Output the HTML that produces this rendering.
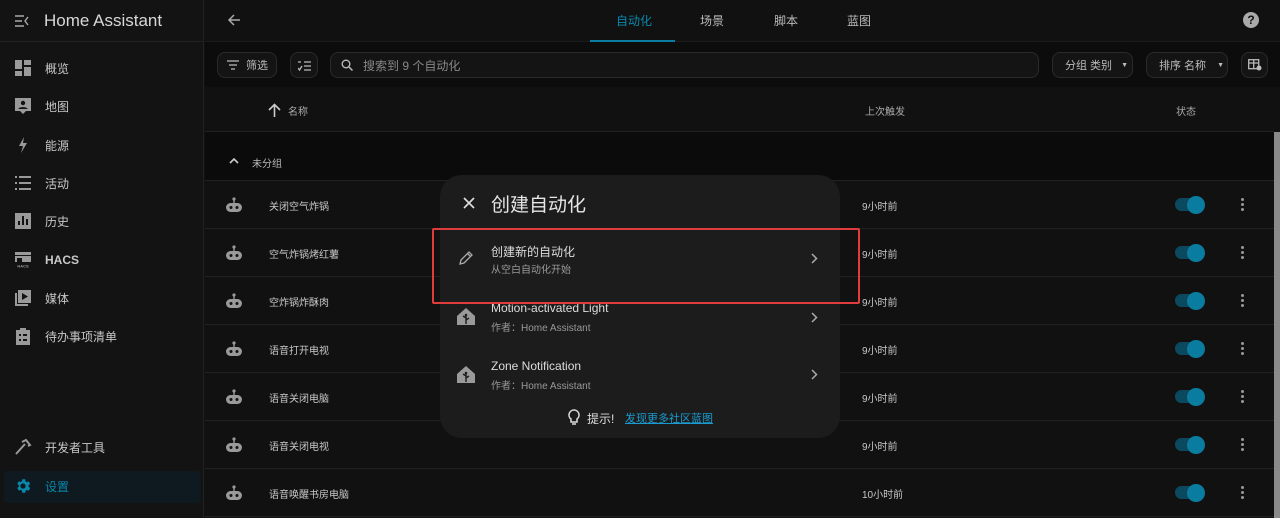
<!DOCTYPE html>
<html><head><meta charset="utf-8"><style>
*{box-sizing:border-box;margin:0;padding:0}
body{width:1280px;height:518px;overflow:hidden;background:#111;font-family:"Liberation Sans","Noto Sans CJK SC",sans-serif;color:#e1e1e1;position:relative}
.side{position:absolute;left:0;top:0;width:204px;height:518px;background:#131313;border-right:1px solid #222}
.side .hd{height:42px;border-bottom:1px solid #222;display:flex;align-items:center;padding-left:15px}
.side .hd span{font-size:17px;color:#d8d8d8;margin-left:15px}
.item{position:absolute;left:0;width:204px;height:32px;display:flex;align-items:center;font-size:12px;color:#c8c8c8}
.item svg{position:absolute;left:14px}
.item span{position:absolute;left:45px}
.top{position:absolute;left:205px;top:0;right:0;height:42px;background:#111;border-bottom:1px solid #1b1b1b}
.tab{position:absolute;top:12px;font-size:12px;color:#bbb}
.tb{position:absolute;left:205px;top:42px;right:0;height:45px;background:#0c0c0c}
.btn{position:absolute;top:52px;height:26px;border:1px solid #2a2a2a;border-radius:8px;background:#141414;font-size:11px;color:#bbb;display:flex;align-items:center}
.hrow{position:absolute;left:205px;top:87px;right:6px;height:45px;background:#111;border-bottom:1px solid #222;font-size:10px;color:#aaa}
.grp{position:absolute;left:205px;top:132px;right:6px;height:49px;background:#0b0b0b;border-bottom:1px solid #222;font-size:10px;color:#bbb}
.row{position:absolute;left:205px;right:6px;height:48px;background:#111;border-bottom:1px solid #222;font-size:10px;color:#c8c8c8}
.row .n{position:absolute;left:64px;top:17px}
.row .t{position:absolute;left:657px;top:17px}
.row .rb{position:absolute;left:20px;top:16px}
.tg{position:absolute;left:970px;top:17px;width:28px;height:13px;border-radius:7px;background:#0b4a5e}
.tg:after{content:"";position:absolute;right:-2px;top:-2.5px;width:18px;height:18px;border-radius:50%;background:#0a7ca0}
.dots{position:absolute;left:1036px;top:17px;width:3px}
.dots i{display:block;width:3px;height:3px;border-radius:50%;background:#999;margin-bottom:2px}
.dlg{position:absolute;left:440px;top:175px;width:400px;height:263px;background:#1c1c1c;border-radius:22px}
.red{position:absolute;left:432px;top:228px;width:428px;height:76px;border:2px solid #e03c3c;border-radius:2px}
.chev{position:absolute;left:371px}
</style></head><body>
<div class="side">
 <div class="hd"><svg width="14" height="12" viewBox="0 0 14 12"><path d="M0 1h9M0 6h7M0 11h9M13 2l-3 4 3 4" stroke="#aaa" stroke-width="1.4" fill="none"/></svg><span>Home Assistant</span></div>
 <div class="item" style="top:52px"><svg width="18" height="18" viewBox="0 0 18 18" fill="#9a9a9a"><rect x="1" y="1" width="7" height="9"/><rect x="10" y="1" width="7" height="5"/><rect x="1" y="12" width="7" height="5"/><rect x="10" y="8" width="7" height="9"/></svg><span>概览</span></div>
 <div class="item" style="top:90px"><svg width="18" height="18" viewBox="0 0 18 18" fill="#9a9a9a"><path d="M1 1h16v13h-5l-3 3-3-3H1z"/><circle cx="9" cy="6" r="2.2" fill="#131313"/><path d="M4.5 12c0-2.5 9-2.5 9 0z" fill="#131313"/></svg><span>地图</span></div>
 <div class="item" style="top:129px"><svg width="18" height="18" viewBox="0 0 18 18" fill="#9a9a9a"><path d="M10 1L5 10h4l-2 7 6-10H9z"/></svg><span>能源</span></div>
 <div class="item" style="top:167px"><svg width="18" height="18" viewBox="0 0 18 18" fill="#9a9a9a"><rect x="1" y="2" width="2" height="2"/><rect x="1" y="8" width="2" height="2"/><rect x="1" y="14" width="2" height="2"/><rect x="5" y="2" width="12" height="2"/><rect x="5" y="8" width="12" height="2"/><rect x="5" y="14" width="12" height="2"/></svg><span>活动</span></div>
 <div class="item" style="top:205px"><svg width="18" height="18" viewBox="0 0 18 18" fill="#9a9a9a"><path d="M1 1h16v16H1z"/><path d="M4 13V9h2v4zM8 13V4h2v9zM12 13V7h2v6z" fill="#131313"/></svg><span>历史</span></div>
 <div class="item" style="top:244px;font-weight:bold"><svg width="18" height="18" viewBox="0 0 18 18" fill="#9a9a9a"><rect x="1" y="1" width="16" height="3"/><rect x="1" y="5" width="16" height="6"/><rect x="3" y="7" width="5" height="4" fill="#131313"/><text x="9" y="16.5" font-size="4" text-anchor="middle" fill="#9a9a9a">HACS</text></svg><span>HACS</span></div>
 <div class="item" style="top:282px"><svg width="18" height="18" viewBox="0 0 18 18" fill="#9a9a9a"><path d="M4 1h13v13H4z"/><path d="M1 4h2v11h11v2H1z"/><path d="M8 4l6 3.5L8 11z" fill="#131313"/></svg><span>媒体</span></div>
 <div class="item" style="top:320px"><svg width="18" height="18" viewBox="0 0 18 18" fill="#9a9a9a"><path d="M2 3h14v15H2z"/><rect x="6" y="1" width="6" height="3"/><rect x="5" y="7" width="2" height="2" fill="#131313"/><rect x="5" y="12" width="2" height="2" fill="#131313"/><rect x="9" y="7" width="4" height="2" fill="#131313"/><rect x="9" y="12" width="4" height="2" fill="#131313"/></svg><span>待办事项清单</span></div>
 <div class="item" style="top:431px"><svg width="18" height="18" viewBox="0 0 18 18"><path d="M2 16L11 6M8 4l4-2 4 5-2 1" stroke="#9a9a9a" stroke-width="2" fill="none"/></svg><span>开发者工具</span></div>
 <div style="position:absolute;left:4px;top:471px;width:197px;height:32px;border-radius:4px;background:#0e1a1f"></div>
 <div class="item" style="top:470px;color:#0a87ad"><svg width="18" height="18" viewBox="0 0 24 24" fill="#0a87ad"><path d="M12 15.5A3.5 3.5 0 1 1 12 8.5a3.5 3.5 0 0 1 0 7zm7.4-2.5c.1-.3.1-.7.1-1s0-.7-.1-1l2.1-1.6-2-3.5-2.5 1a7 7 0 0 0-1.7-1L15 3h-4l-.4 2.6a7 7 0 0 0-1.7 1l-2.500-1-2 3.5L6.5 11c0 .3-.1.7-.1 1s0 .7.1 1l-2.1 1.6 2 3.5 2.5-1c.5.4 1.1.7 1.7 1L11 21h4l.4-2.6c.6-.3 1.2-.6 1.7-1l2.5 1 2-3.5z"/></svg><span>设置</span></div>
</div>
<div class="top">
 <svg style="position:absolute;left:22px;top:13px" width="14" height="14" viewBox="0 0 14 14"><path d="M13 7H2M7 2L2 7l5 5" stroke="#aaa" stroke-width="1.5" fill="none"/></svg>
 <div class="tab" style="left:411px;color:#0a87ad">自动化</div>
 <div style="position:absolute;left:385px;top:40px;width:85px;height:2px;background:#0a7ca0"></div>
 <div class="tab" style="left:495px">场景</div>
 <div class="tab" style="left:569px">脚本</div>
 <div class="tab" style="left:642px">蓝图</div>
 <div style="position:absolute;left:1038px;top:12px;width:16px;height:16px;border-radius:50%;background:#aaa;color:#111;font-size:12px;font-weight:bold;text-align:center;line-height:16px">?</div>
</div>
<div class="tb"></div>
<div class="btn" style="left:217px;width:60px"><svg style="margin-left:9px" width="12" height="10"><path d="M0 1h12M2 5h8M4 9h4" stroke="#bbb" stroke-width="1.3"/></svg><span style="margin-left:7px">筛选</span></div>
<div class="btn" style="left:290px;width:28px"><svg style="margin-left:7px" width="13" height="11"><path d="M0 2h3M6 2h7M6 6h7M6 10h7M0 8l1.5 2L4 6" stroke="#bbb" stroke-width="1.3" fill="none"/></svg></div>
<div class="btn" style="left:330px;width:709px;font-size:12px;color:#888"><svg style="margin-left:10px" width="12" height="12"><circle cx="5" cy="5" r="3.8" stroke="#bbb" stroke-width="1.4" fill="none"/><path d="M8 8l3.5 3.5" stroke="#bbb" stroke-width="1.5"/></svg><span style="margin-left:10px">搜索到 9 个自动化</span></div>
<div class="btn" style="left:1052px;width:81px"><span style="margin-left:12px">分组 类别</span><span style="margin-left:9px;font-size:7px">▼</span></div>
<div class="btn" style="left:1146px;width:82px"><span style="margin-left:12px">排序 名称</span><span style="margin-left:11px;font-size:7px">▼</span></div>
<div class="btn" style="left:1241px;width:27px"><svg style="margin-left:6px" width="14" height="12"><rect x="0.7" y="0.7" width="10" height="9" stroke="#bbb" stroke-width="1.3" fill="none"/><path d="M0.7 4h10M5.7 1v9" stroke="#bbb" stroke-width="1.3"/><circle cx="11" cy="9" r="2.5" fill="#bbb"/></svg></div>
<div class="hrow"><svg style="position:absolute;left:63px;top:16px" width="13" height="14"><path d="M6.5 14V2M1 7l5.5-5.5L12 7" stroke="#ccc" stroke-width="1.6" fill="none"/></svg><span style="position:absolute;left:83px;top:16px">名称</span><span style="position:absolute;left:660px;top:16px">上次触发</span><span style="position:absolute;left:971px;top:16px">状态</span></div>
<div class="grp"><svg style="position:absolute;left:24px;top:25px" width="10" height="7"><path d="M1 6l4-4 4 4" stroke="#ccc" stroke-width="1.6" fill="none"/></svg><span style="position:absolute;left:47px;top:23px">未分组</span></div>
<div style="position:absolute;right:0;top:132px;width:6px;height:386px;background:#8a8a8a"></div>
<div class="row" style="top:181px"><svg class="rb" width="18" height="16" viewBox="0 0 18 16" fill="#9a9a9a"><circle cx="9" cy="2" r="1.6"/><rect x="8.3" y="2" width="1.4" height="4"/><rect x="1" y="6" width="16" height="9" rx="4.5"/><circle cx="6" cy="10.5" r="1.5" fill="#111"/><circle cx="12" cy="10.5" r="1.5" fill="#111"/></svg><span class="n">关闭空气炸锅</span><span class="t">9小时前</span><div class="tg"></div><div class="dots"><i></i><i></i><i></i></div></div>
<div class="row" style="top:229px"><svg class="rb" width="18" height="16" viewBox="0 0 18 16" fill="#9a9a9a"><circle cx="9" cy="2" r="1.6"/><rect x="8.3" y="2" width="1.4" height="4"/><rect x="1" y="6" width="16" height="9" rx="4.5"/><circle cx="6" cy="10.5" r="1.5" fill="#111"/><circle cx="12" cy="10.5" r="1.5" fill="#111"/></svg><span class="n">空气炸锅烤红薯</span><span class="t">9小时前</span><div class="tg"></div><div class="dots"><i></i><i></i><i></i></div></div>
<div class="row" style="top:277px"><svg class="rb" width="18" height="16" viewBox="0 0 18 16" fill="#9a9a9a"><circle cx="9" cy="2" r="1.6"/><rect x="8.3" y="2" width="1.4" height="4"/><rect x="1" y="6" width="16" height="9" rx="4.5"/><circle cx="6" cy="10.5" r="1.5" fill="#111"/><circle cx="12" cy="10.5" r="1.5" fill="#111"/></svg><span class="n">空炸锅炸酥肉</span><span class="t">9小时前</span><div class="tg"></div><div class="dots"><i></i><i></i><i></i></div></div>
<div class="row" style="top:325px"><svg class="rb" width="18" height="16" viewBox="0 0 18 16" fill="#9a9a9a"><circle cx="9" cy="2" r="1.6"/><rect x="8.3" y="2" width="1.4" height="4"/><rect x="1" y="6" width="16" height="9" rx="4.5"/><circle cx="6" cy="10.5" r="1.5" fill="#111"/><circle cx="12" cy="10.5" r="1.5" fill="#111"/></svg><span class="n">语音打开电视</span><span class="t">9小时前</span><div class="tg"></div><div class="dots"><i></i><i></i><i></i></div></div>
<div class="row" style="top:373px"><svg class="rb" width="18" height="16" viewBox="0 0 18 16" fill="#9a9a9a"><circle cx="9" cy="2" r="1.6"/><rect x="8.3" y="2" width="1.4" height="4"/><rect x="1" y="6" width="16" height="9" rx="4.5"/><circle cx="6" cy="10.5" r="1.5" fill="#111"/><circle cx="12" cy="10.5" r="1.5" fill="#111"/></svg><span class="n">语音关闭电脑</span><span class="t">9小时前</span><div class="tg"></div><div class="dots"><i></i><i></i><i></i></div></div>
<div class="row" style="top:421px"><svg class="rb" width="18" height="16" viewBox="0 0 18 16" fill="#9a9a9a"><circle cx="9" cy="2" r="1.6"/><rect x="8.3" y="2" width="1.4" height="4"/><rect x="1" y="6" width="16" height="9" rx="4.5"/><circle cx="6" cy="10.5" r="1.5" fill="#111"/><circle cx="12" cy="10.5" r="1.5" fill="#111"/></svg><span class="n">语音关闭电视</span><span class="t">9小时前</span><div class="tg"></div><div class="dots"><i></i><i></i><i></i></div></div>
<div class="row" style="top:469px"><svg class="rb" width="18" height="16" viewBox="0 0 18 16" fill="#9a9a9a"><circle cx="9" cy="2" r="1.6"/><rect x="8.3" y="2" width="1.4" height="4"/><rect x="1" y="6" width="16" height="9" rx="4.5"/><circle cx="6" cy="10.5" r="1.5" fill="#111"/><circle cx="12" cy="10.5" r="1.5" fill="#111"/></svg><span class="n">语音唤醒书房电脑</span><span class="t">10小时前</span><div class="tg"></div><div class="dots"><i></i><i></i><i></i></div></div>

<div class="dlg">
 <svg style="position:absolute;left:23px;top:22px" width="12" height="12"><path d="M1 1l10 10M11 1L1 11" stroke="#ddd" stroke-width="1.7"/></svg>
 <div style="position:absolute;left:51px;top:15px;font-size:19px;color:#e6e6e6">创建自动化</div>
 <svg style="position:absolute;left:18px;top:75px" width="16" height="16" viewBox="0 0 16 16"><path d="M2 14l1-4 8-8 3 3-8 8zM9.5 3.5l3 3" stroke="#aaa" stroke-width="1.3" fill="none"/></svg>
 <div style="position:absolute;left:51px;top:68px;font-size:12px;color:#ddd">创建新的自动化</div>
 <div style="position:absolute;left:51px;top:86px;font-size:10px;color:#999">从空白自动化开始</div>
 <svg class="chev" style="top:78px" width="7" height="11"><path d="M1 1l4.5 4.5L1 10" stroke="#aaa" stroke-width="1.5" fill="none"/></svg>
 <svg style="position:absolute;left:17px;top:133px" width="18" height="17" viewBox="0 0 18 17"><path d="M9 0L0 8v9h18V8z" fill="#9a9a9a"/><path d="M9 16V7M9 10l-3-2M9 12l3-2" stroke="#1c1c1c" stroke-width="1.4"/><circle cx="9" cy="7" r="1.3" fill="#1c1c1c"/></svg>
 <div style="position:absolute;left:51px;top:126px;font-size:12px;color:#ddd">Motion-activated Light</div>
 <div style="position:absolute;left:51px;top:144px;font-size:10px;color:#999">作者：Home Assistant</div>
 <svg class="chev" style="top:137px" width="7" height="11"><path d="M1 1l4.5 4.5L1 10" stroke="#aaa" stroke-width="1.5" fill="none"/></svg>
 <svg style="position:absolute;left:17px;top:191px" width="18" height="17" viewBox="0 0 18 17"><path d="M9 0L0 8v9h18V8z" fill="#9a9a9a"/><path d="M9 16V7M9 10l-3-2M9 12l3-2" stroke="#1c1c1c" stroke-width="1.4"/><circle cx="9" cy="7" r="1.3" fill="#1c1c1c"/></svg>
 <div style="position:absolute;left:51px;top:184px;font-size:12px;color:#ddd">Zone Notification</div>
 <div style="position:absolute;left:51px;top:202px;font-size:10px;color:#999">作者：Home Assistant</div>
 <svg class="chev" style="top:194px" width="7" height="11"><path d="M1 1l4.5 4.5L1 10" stroke="#aaa" stroke-width="1.5" fill="none"/></svg>
 <svg style="position:absolute;left:128px;top:234px" width="12" height="17" viewBox="0 0 12 17"><path d="M6 1a5 5 0 0 0-3 9v3h6v-3a5 5 0 0 0-3-9zM4 15h4" stroke="#ddd" stroke-width="1.5" fill="none"/></svg>
 <div style="position:absolute;left:147px;top:235px;font-size:12px;color:#ddd">提示!</div>
 <div style="position:absolute;left:185px;top:235px;font-size:11px;color:#1a9bd0;text-decoration:underline">发现更多社区蓝图</div>
</div>
<div class="red"></div>
</body></html>
